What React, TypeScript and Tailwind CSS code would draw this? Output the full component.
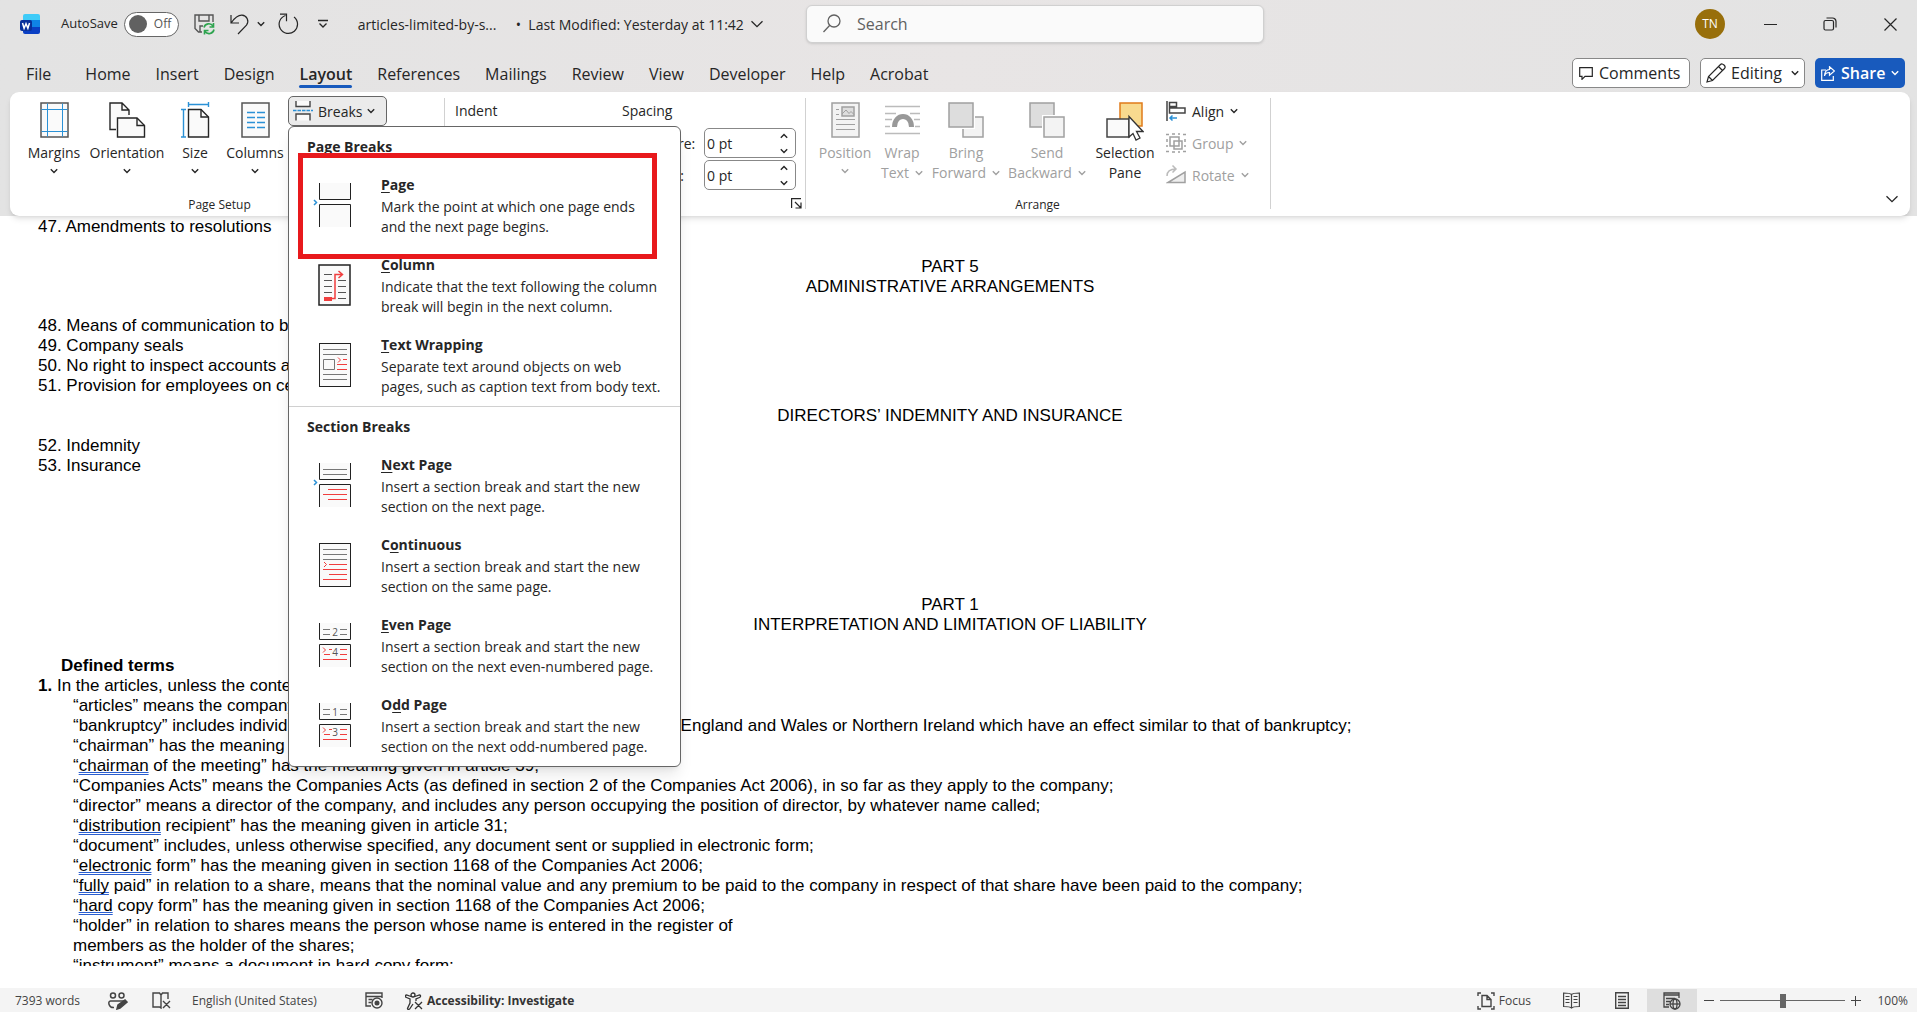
import { ReactNode, SVGProps } from "react";

const blue = "#2b91d6";
const red = "#f03e3e";

function Svg({ w, h, children, ...rest }: { w: number; h: number; children: ReactNode } & SVGProps<SVGSVGElement>) {
  return (
    <svg width={w} height={h} viewBox={`0 0 ${w} ${h}`} fill="none" stroke="currentColor" className="shrink-0" aria-hidden="true" {...rest}>
      {children}
    </svg>
  );
}

function Chevron({ large }: { large?: boolean }) {
  return large ? (
    <Svg w={14} h={8} strokeWidth={1.3}>
      <path d="M1.5 1.2 7 6.7l5.5-5.5" />
    </Svg>
  ) : (
    <Svg w={8} h={6} strokeWidth={1.4}>
      <path d="M.8 1.2 4 4.4l3.2-3.2" />
    </Svg>
  );
}

/* title bar icons */

function WordLogo() {
  return (
    <Svg w={20} h={20} stroke="none">
      <path d="M5 0h13a2 2 0 0 1 2 2v5H3V2a2 2 0 0 1 2-2z" fill="#3fcbf8" />
      <path d="M3 6h17v8H3z" fill="#0f83e6" />
      <path d="M3 13h17v5a2 2 0 0 1-2 2H5a2 2 0 0 1-2-2z" fill="#0a3fc4" />
      <rect x="0" y="6" width="12" height="11" rx="2" fill="#08309b" />
      <path d="M2.5 9l1.6 5.2L6 9.6l1.9 4.6L9.5 9" stroke="#fff" strokeWidth="1.5" />
    </Svg>
  );
}

function SaveIcon() {
  return (
    <Svg w={21} h={21} strokeWidth={1.4}>
      <path d="M8 18H4.5L1 14.5V1h18v7" stroke="#555" />
      <path d="M5 1v6h10V1M6 18v-6h3" stroke="#555" />
      <path d="M10 13.5a5 5 0 0 1 9-1.5M19.5 9v4h-4M20 15.5a5 5 0 0 1-9 2M10.5 20.5v-4h4" stroke="#2ea44f" strokeWidth="1.6" />
    </Svg>
  );
}

function UndoIcon() {
  return (
    <Svg w={20} h={21} strokeWidth={1.2}>
      <path d="M1 1v8h8M1.5 8.5C5 3.5 8 1 12 1.200c5 .4 7.500 5.800 4.500 10L8 20" />
    </Svg>
  );
}

function RedoIcon() {
  return (
    <Svg w={22} h={22} strokeWidth={1.2}>
      <path d="M2 1.200h6.500v7M7.500 2.500A9.200 9.200 0 1 0 16 4" />
    </Svg>
  );
}

/* ribbon icons */

function MarginsIcon() {
  return (
    <Svg w={29} h={36}>
      <rect x="1" y="1" width="27" height="34" fill="#fafafa" stroke="#555" strokeWidth="1.5" />
      <path d="M7.5 1.5v33M22.5 1.5v33M1.5 7.5h26M1.5 29.5h26" stroke={blue} />
    </Svg>
  );
}

function OrientationIcon() {
  return (
    <Svg w={37} h={36} strokeWidth={1.4}>
      <path d="M7 28H1V1h12l7 7v8H9v12z" fill="#fafafa" stroke="none" />
      <path d="M7 27.5H1V1h12l7 7v5M13 1v7h7" />
      <path d="M8.5 16H28l7.5 7.5V35h-27z" fill="#fafafa" />
      <path d="M28 16v7.5h7.5" />
    </Svg>
  );
}

function SizeIcon() {
  return (
    <Svg w={29} h={36} strokeWidth={1.4}>
      <path d="M7.5 7.5H20l7.5 7.5v20h-20z" fill="#fafafa" />
      <path d="M20 7.5V15h7.5" />
      <path d="M7.5 2.5h20M7.5 0v5M27.5 0v5M2.5 7.5V35M0 7.5h5M0 35h5" stroke={blue} />
    </Svg>
  );
}

function ColumnsIcon() {
  return (
    <Svg w={29} h={36}>
      <rect x="1" y="1" width="27" height="34" fill="#fafafa" stroke="#555" strokeWidth="1.5" />
      <path d="M6 10.5h8M16 10.5h8M6 15.5h8M16 15.5h8M6 20.5h8M16 20.5h8M6 25.5h8M16 25.5h8" stroke={blue} strokeWidth="1.5" />
    </Svg>
  );
}

function BreaksIcon() {
  return (
    <Svg w={20} h={20} strokeWidth={1.4}>
      <path d="M3 0v5.5h14V0M3 19.5V13h14v6.5" stroke="#444" fill="#fafafa" />
      <path d="M0 9.5h20" stroke={blue} strokeDasharray="3.5 1" />
    </Svg>
  );
}

function PositionIcon() {
  return (
    <Svg w={29} h={36}>
      <rect x="1" y="1" width="27" height="34" fill="#f3f3f3" strokeWidth="1.5" />
      <path d="M5 7.5h3M5 12.5h3M5 17.5h19M5 22.5h19M5 27.5h19" />
      <rect x="11" y="5" width="12" height="9" fill="#ddd" strokeWidth="1.5" />
      <path d="m11 12 4-4 3 3.5 2-2 3 3" />
    </Svg>
  );
}

function WrapTextIcon() {
  return (
    <Svg w={37} h={36}>
      <path d="M1 4.5h35M1 11.5h11M26 11.5h10M1 17.5h7M30 17.5h6M1 24.5h5M31 24.5h5M1 31.5h35" stroke="#bbb" strokeWidth="1.5" />
      <path d="M10.5 25c0-14 17-14 17 0" stroke="#999" strokeWidth="5" />
    </Svg>
  );
}

function BringForwardIcon() {
  return (
    <Svg w={36} h={36} strokeWidth={1.5}>
      <rect x="15" y="15" width="20" height="20" fill="#f3f3f3" />
      <rect x="0" y="0" width="27" height="27" fill="#fff" stroke="none" />
      <rect x="1" y="1" width="24" height="24" fill="#ddd" />
    </Svg>
  );
}

function SendBackwardIcon() {
  return (
    <Svg w={36} h={36} strokeWidth={1.5}>
      <rect x="1" y="1" width="24" height="24" fill="#ddd" />
      <rect x="13" y="13" width="24" height="24" fill="#fff" stroke="none" />
      <rect x="15" y="15" width="20" height="20" fill="#f3f3f3" />
    </Svg>
  );
}

function SelectionPaneIcon() {
  return (
    <Svg w={38} h={40} strokeWidth={1.5}>
      <rect x="14" y="1" width="22" height="23" fill="#f8da8f" stroke="#e07b1a" />
      <rect x="1" y="17" width="22" height="18" fill="#fafafa" stroke="#444" />
      <path d="M23 14.5 37 29.5h-6.500l3.500 6.500-4 2-3-6.500-4 3.500z" fill="#fff" stroke="#333" strokeWidth="1.3" />
    </Svg>
  );
}

function AlignIcon() {
  return (
    <Svg w={20} h={20} strokeWidth={1.5}>
      <path d="M1 0v20M3.5 1.5h7v4h-7zM3.5 7h15.5v5H3.5z" stroke="#444" />
      <path d="M11 17H4M6.5 14.5 4 17l2.5 2.5" stroke={blue} />
    </Svg>
  );
}

function GroupIcon() {
  return (
    <Svg w={20} h={20} strokeWidth={1.5}>
      <path d="M4 4h9v9H4zM8 8h8v8H8z" />
      <path d="M0 1.5h3M17 1.5h3M0 18.5h3M17 18.5h3M6 1h8M6 19h8M1 6v8M19 6v8" strokeDasharray="3 3" />
    </Svg>
  );
}

function RotateIcon() {
  return (
    <Svg w={20} h={20} strokeWidth={1.5}>
      <path d="M1 11C1 6 4 4 10 4M6.5.5 10 4 6.5 7.5" stroke="#bbb" />
      <path d="M2 17.5h17V7z" fill="#eee" />
    </Svg>
  );
}

/* menu icons, all drawn on the same 38 x 44 sheet */

function SplitPages({ children, arrow }: { children?: ReactNode; arrow?: boolean }) {
  return (
    <Svg w={38} h={44}>
      <path d="M6.5 0v16.5h31V0M6.5 44V21.5h31V44" fill="#fafafa" stroke="#222" />
      {arrow && <path d="m1 17 2.5 2.5L1 22" stroke={blue} strokeWidth="1.5" />}
      {children}
    </Svg>
  );
}

function NumberedPages({ first, second }: { first: string; second: string }) {
  return (
    <SplitPages>
      <path d="M10 6.5h7M10 11.5h7M27 6.5h7M27 11.5h7" stroke="#777" />
      <path d="M16 26.5h3M11 31.5h6M27 26.5h7M27 31.5h7M10 36.5h24M10 24.5l2.5 2.5-2.5 2.5" stroke={red} />
      <g fill="#555" stroke="none" fontSize="10" textAnchor="middle" fontFamily="Open Sans, sans-serif">
        <text x="22" y="13">{first}</text>
        <text x="22" y="33">{second}</text>
      </g>
    </SplitPages>
  );
}

function ColumnBreakIcon() {
  return (
    <Svg w={38} h={44}>
      <rect x="6" y="2" width="31" height="40" fill="#fafafa" stroke="#222" strokeWidth="1.5" />
      <path d="M11 11.5h8M11 17.5h8M11 23.5h8M11 29.5h8M25 17.5h8M25 23.5h8M25 29.5h8M25 35.5h8" stroke="#555" />
      <path d="M18 35.5h4v-24h7M25.5 8l4 3.5-4 3.5" stroke={red} strokeWidth="1.5" />
      <path d="M11 34h8v4h-8z" fill={red} stroke="none" />
    </Svg>
  );
}

function TextWrappingIcon() {
  return (
    <Svg w={38} h={44}>
      <rect x="6.5" y=".5" width="31" height="43" fill="#fafafa" stroke="#222" />
      <path d="M10 6.5h24M10 11.5h24M10.5 16.5h11v10h-11zM10 31.5h24M10 36.5h24" stroke="#777" />
      <path d="M30 16.5h4M24 21.5h10M24 26.5h10M25 14.5l2.5 2.5-2.5 2.5" stroke={red} />
    </Svg>
  );
}

function ContinuousIcon() {
  return (
    <Svg w={38} h={44}>
      <rect x="6.5" y=".5" width="31" height="43" fill="#fafafa" stroke="#222" />
      <path d="M10 6.5h24M10 11.5h24M10 16.5h24" stroke="#777" />
      <path d="M16 21.5h18M10 26.5h24M16 31.5h18M10 36.5h24M11 19l2.5 2.5L11 24" stroke={red} />
    </Svg>
  );
}

type BreakItem = { title: string; accessKey: number; text: string; icon: ReactNode };

const pageBreaks: BreakItem[] = [
  { title: "Page", accessKey: 0, text: "Mark the point at which one page ends\nand the next page begins.", icon: <SplitPages arrow /> },
  { title: "Column", accessKey: 0, text: "Indicate that the text following the column\nbreak will begin in the next column.", icon: <ColumnBreakIcon /> },
  { title: "Text Wrapping", accessKey: 0, text: "Separate text around objects on web\npages, such as caption text from body text.", icon: <TextWrappingIcon /> },
];

const sectionBreaks: BreakItem[] = [
  {
    title: "Next Page",
    accessKey: 0,
    text: "Insert a section break and start the new\nsection on the next page.",
    icon: (
      <SplitPages arrow>
        <path d="M10 6.5h24M10 11.5h24" stroke="#777" />
        <path d="M15 26.5h19M10 31.5h24M15 36.5h19" stroke={red} />
      </SplitPages>
    ),
  },
  { title: "Continuous", accessKey: 1, text: "Insert a section break and start the new\nsection on the same page.", icon: <ContinuousIcon /> },
  { title: "Even Page", accessKey: 0, text: "Insert a section break and start the new\nsection on the next even-numbered page.", icon: <NumberedPages first="2" second="4" /> },
  { title: "Odd Page", accessKey: 1, text: "Insert a section break and start the new\nsection on the next odd-numbered page.", icon: <NumberedPages first="1" second="3" /> },
];

function MenuItem({ item }: { item: BreakItem }) {
  const { title, accessKey } = item;
  return (
    <button role="menuitem" className="flex h-20 w-full items-start gap-[30px] pl-6 text-left">
      <span className="mt-[18px]">{item.icon}</span>
      <span className="pt-[10px]">
        <span className="block text-[14px] font-bold leading-5">
          {title.slice(0, accessKey)}
          <span className="underline underline-offset-2">{title[accessKey]}</span>
          {title.slice(accessKey + 1)}
        </span>
        <span className="mt-[2px] block whitespace-pre text-[14px] leading-5">{item.text}</span>
      </span>
    </button>
  );
}

function BreaksMenu() {
  return (
    <div role="menu" className="absolute left-0 top-[30px] z-10 w-[393px] rounded-md border border-[#666] bg-white pb-px text-[#262626] shadow-lg">
      <div className="flex h-[38px] items-center pl-[18px] text-[14px] font-bold">Page Breaks</div>
      {pageBreaks.map((item) => (
        <MenuItem key={item.title} item={item} />
      ))}
      <div className="mt-px flex h-[39px] items-center border-t border-[#d0d0d0] pl-[18px] text-[14px] font-bold">Section Breaks</div>
      {sectionBreaks.map((item) => (
        <MenuItem key={item.title} item={item} />
      ))}
      <div className="pointer-events-none absolute left-[9px] top-[26px] h-[106px] w-[359px] border-[5px] border-[#e8191c]" />
    </div>
  );
}

function TitleBar() {
  return (
    <div className="flex h-12 items-center">
      <div className="flex w-[806px] shrink-0 items-center pl-5">
        <WordLogo />
        <label className="ml-[21px] flex items-center gap-[6px] text-[13px]">
          AutoSave
          <input type="checkbox" className="peer sr-only" />
          <span className="flex h-[25px] w-[55px] items-center gap-[7px] rounded-full border border-[#666] bg-white pl-1 text-[12px] text-[#555]">
            <span className="h-[18px] w-[18px] rounded-full bg-[#616161]" />
            Off
          </span>
        </label>
        <button aria-label="Save" className="ml-[15px]"><SaveIcon /></button>
        <button aria-label="Undo" className="ml-[15px]"><UndoIcon /></button>
        <button aria-label="Undo history" className="ml-[7px]"><Chevron /></button>
        <button aria-label="Redo" className="ml-[13px]"><RedoIcon /></button>
        <button aria-label="Customise toolbar" className="ml-[18px]">
          <Svg w={10} h={10} strokeWidth={1.3}>
            <path d="M0 1.5h10M1.5 4.5 5 8l3.5-3.5" />
          </Svg>
        </button>
        <button className="ml-[30px] flex items-center whitespace-nowrap text-[14px]">
          <span className="w-[158px] text-left">articles-limited-by-s...</span>
          <span className="mr-[6px]">•&nbsp; Last Modified: Yesterday at 11:42</span>
          <Chevron large />
        </button>
      </div>
      <label className="mb-px flex h-[38px] w-[458px] items-center gap-4 rounded-md border border-[#d0d0d0] bg-[#fafafa] pl-4 text-[#616161] shadow-sm">
        <Svg w={18} h={19} strokeWidth={1.3}>
          <circle cx="11" cy="7" r="6" />
          <path d="M6.8 11.3.5 18" />
        </Svg>
        <input type="text" placeholder="Search" aria-label="Search" className="min-w-0 flex-1 bg-transparent text-[16px] outline-none placeholder:text-[#616161]" />
      </label>
      <div className="ml-auto mr-1 flex items-center gap-[14px]">
        <button className="mr-2 h-[30px] w-[30px] rounded-full bg-[#986f0b] text-[12px] text-white">TN</button>
        <button aria-label="Minimise" className="flex h-8 w-[46px] items-center justify-center">
          <Svg w={13} h={13}><path d="M0 6.5h13" /></Svg>
        </button>
        <button aria-label="Restore" className="flex h-8 w-[46px] items-center justify-center">
          <Svg w={14} h={14} strokeWidth={1.2}>
            <rect x="1" y="3.5" width="9.5" height="9.5" rx="1.5" />
            <path d="M3.5 1h6a3.500 3.500 0 0 1 3.5 3.5v6" />
          </Svg>
        </button>
        <button aria-label="Close" className="flex h-8 w-[46px] items-center justify-center">
          <Svg w={13} h={13} strokeWidth={1.2}><path d="m.5.5 12 12M12.5.5l-12 12" /></Svg>
        </button>
      </div>
    </div>
  );
}

const tabs = ["Home", "Insert", "Design", "Layout", "References", "Mailings", "Review", "View", "Developer", "Help", "Acrobat"];

function TabRow() {
  return (
    <div className="flex h-11 items-center pl-[26px] pr-3 pt-2 text-[16px]">
      <button className="mr-[34px]">File</button>
      <nav className="flex gap-[25px]">
        {tabs.map((tab) =>
          tab === "Layout" ? (
            <button key={tab} className="relative font-semibold">
              {tab}
              <span className="absolute inset-x-0 -bottom-[2px] h-[3px] rounded-full bg-[#185abd]" />
            </button>
          ) : (
            <button key={tab}>{tab}</button>
          )
        )}
      </nav>
      <div className="mb-[2px] ml-auto flex gap-[10px]">
        <button className="flex h-[30px] w-[118px] items-center gap-[6px] rounded-[5px] border border-[#888] bg-white pl-[6px]">
          <Svg w={14} h={13} strokeWidth={1.2}>
            <path d="M.7.7h12.6v8.6H6L3 12.3v-3H.7z" />
          </Svg>
          Comments
        </button>
        <button className="flex h-[30px] w-[105px] items-center gap-[5px] rounded-[5px] border border-[#888] bg-white pl-[5px]">
          <Svg w={20} h={20} strokeWidth={1.2}>
            <path d="M1 19l1.5-5.5L14.5 1.5c2-2 6 2 4 4L6.5 17.5zM12.5 3.5l4 4M2.5 13.5l4 4" />
          </Svg>
          Editing
          <span className="ml-1"><Chevron /></span>
        </button>
        <button className="flex h-[30px] w-[90px] items-center gap-[6px] rounded-[5px] bg-[#185abd] pl-[6px] font-semibold text-white">
          <Svg w={14} h={15} strokeWidth={1.2}>
            <path d="M5 4H.7v10.3h11.6V10M8.5.8l5 4.2-5 4.2V6.5c-3 0-4.500 1-5 3.5 0-4 2-6.500 5-6.500z" />
          </Svg>
          Share
          <Chevron />
        </button>
      </div>
    </div>
  );
}

function RibbonButton({ icon, lines, width, chevron, inlineChevron, disabled }: { icon: ReactNode; lines: string[]; width: string; chevron?: boolean; inlineChevron?: boolean; disabled?: boolean }) {
  return (
    <button disabled={disabled} className={`flex flex-col items-center pt-[6px] text-[14px] leading-5 disabled:text-[#a0a0a0] ${width}`}>
      <span className="mb-[5px] h-9">{icon}</span>
      {lines.map((line, i) => (
        <span key={line} className="flex items-center gap-[6px] whitespace-nowrap">
          {line}
          {inlineChevron && i === lines.length - 1 && <Chevron />}
        </span>
      ))}
      {chevron && <span className="mt-[5px]"><Chevron /></span>}
    </button>
  );
}

function Group({ label, children, className }: { label: string; children: ReactNode; className: string }) {
  return (
    <section className={`relative flex h-[124px] shrink-0 flex-col pt-1 ${className}`}>
      <div className="flex flex-1">{children}</div>
      <div className="pb-[2px] text-center text-[12px] leading-[18px]">{label}</div>
      <span className="absolute right-0 top-[6px] h-[111px] w-px bg-[#d1d1d1]" />
    </section>
  );
}

function Spinner({ label, id }: { label: string; id: string }) {
  return (
    <div className="flex h-[30px] items-center">
      <label htmlFor={id} className="w-14">{label}</label>
      <div className="flex h-[30px] w-[92px] items-center rounded-[5px] border border-[#888] bg-white pl-[2px] pr-[7px]">
        <input id={id} type="text" defaultValue="0 pt" className="min-w-0 flex-1 outline-none" />
        <span className="flex flex-col gap-[9px]">
          <button aria-label={`Increase ${label}`} className="rotate-180"><Chevron /></button>
          <button aria-label={`Decrease ${label}`}><Chevron /></button>
        </span>
      </div>
    </div>
  );
}

function SmallButton({ icon, children, disabled }: { icon: ReactNode; children: ReactNode; disabled?: boolean }) {
  return (
    <button disabled={disabled} className="flex h-8 items-center gap-[6px] pb-[2px] disabled:text-[#a0a0a0]">
      {icon}
      {children}
      <Chevron />
    </button>
  );
}

function Ribbon() {
  return (
    <div className="relative z-10 ml-[10px] mr-[7px] flex h-[124px] rounded-[9px] bg-white text-[14px] shadow-md">
      <Group label="Page Setup" className="w-[435px] pl-3 pr-7">
        <RibbonButton icon={<MarginsIcon />} lines={["Margins"]} width="w-16" chevron />
        <RibbonButton icon={<OrientationIcon />} lines={["Orientation"]} width="w-[82px]" chevron />
        <RibbonButton icon={<SizeIcon />} lines={["Size"]} width="w-[54px]" chevron />
        <RibbonButton icon={<ColumnsIcon />} lines={["Columns"]} width="w-[66px]" chevron />
        <div className="relative">
          <button aria-haspopup="menu" aria-expanded="true" className="flex h-[30px] w-[99px] items-center gap-[5px] rounded-[5px] border border-[#666] bg-[#ebebeb] pl-1">
            <BreaksIcon />
            Breaks
            <Chevron />
          </button>
          <BreaksMenu />
        </div>
      </Group>
      <Group label="Paragraph" className="w-[361px] pl-[10px]">
        <div className="w-[167px] leading-[30px]">Indent</div>
        <div>
          <div className="leading-[30px]">Spacing</div>
          <div className="ml-[26px] mt-[2px] flex flex-col gap-[2px]">
            <Spinner label="Before:" id="before" />
            <Spinner label="After:" id="after" />
          </div>
        </div>
        <button aria-label="Paragraph settings" className="absolute bottom-[7px] right-1">
          <Svg w={11} h={11} strokeWidth={1.2}>
            <path d="M10 .6H.6V10M4 4l5.5 5.5M10 4.5V10H4.5" />
          </Svg>
        </button>
      </Group>
      <Group label="Arrange" className="w-[465px] pl-2 pr-[10px]">
        <RibbonButton icon={<PositionIcon />} lines={["Position"]} width="w-[62px]" chevron disabled />
        <RibbonButton icon={<WrapTextIcon />} lines={["Wrap", "Text"]} width="w-[52px]" inlineChevron disabled />
        <RibbonButton icon={<BringForwardIcon />} lines={["Bring", "Forward"]} width="w-[76px]" inlineChevron disabled />
        <RibbonButton icon={<SendBackwardIcon />} lines={["Send", "Backward"]} width="w-[86px]" inlineChevron disabled />
        <RibbonButton icon={<SelectionPaneIcon />} lines={["Selection", "Pane"]} width="w-[70px]" />
        <div className="ml-[6px]">
          <SmallButton icon={<AlignIcon />}>Align</SmallButton>
          <SmallButton icon={<GroupIcon />} disabled>Group</SmallButton>
          <SmallButton icon={<RotateIcon />} disabled>Rotate</SmallButton>
        </div>
      </Group>
      <button aria-label="Collapse ribbon" className="mb-[13px] ml-auto mr-[11px] self-end"><Chevron large /></button>
    </div>
  );
}

/* a word that carries the grammar checker's double underline */
function Flag({ children }: { children: ReactNode }) {
  return <span className="underline decoration-[#2b5fd0] decoration-double decoration-1 underline-offset-1 [text-decoration-skip-ink:none]">{children}</span>;
}

function Page() {
  return (
    <main className="min-h-0 flex-1 bg-white pb-[22px]">
      <div className="h-full overflow-hidden whitespace-nowrap pl-[38px] pr-[55px] pt-px font-['Liberation_Sans',Arial,sans-serif] text-[17px] leading-5 text-black">
        <p>47. Amendments to resolutions</p>
        <h2 className="mt-5 text-center">PART 5<br />ADMINISTRATIVE ARRANGEMENTS</h2>
        <div className="mt-[19px]">
          <p>48. Means of communication to be used</p>
          <p>49. Company seals</p>
          <p>50. No right to inspect accounts and other records</p>
          <p>51. Provision for employees on cessation of business</p>
        </div>
        <h2 className="my-[10px] text-center">DIRECTORS’ INDEMNITY AND INSURANCE</h2>
        <p>52. Indemnity</p>
        <p>53. Insurance</p>
        <h2 className="mb-[21px] mt-[119px] text-center">PART 1<br />INTERPRETATION AND LIMITATION OF LIABILITY</h2>
        <h3 className="pl-[23px] font-bold">Defined terms</h3>
        <p><b>1.</b> In the articles, unless the context requires otherwise—</p>
        <div className="pl-[35px]">
          <p>“articles” means the company’s articles of association;</p>
          <p>“bankruptcy” includes individual insolvency proceeding in jurisdictions other than England and Wales or Northern Ireland which have an effect similar to that of bankruptcy;</p>
          <p>“chairman” has the meaning given in article 12;</p>
          <p>“<Flag>chairman</Flag> of the meeting” has the meaning given in article 39;</p>
          <p>“Companies Acts” means the Companies Acts (as defined in section 2 of the Companies Act 2006), in so far as they apply to the company;</p>
          <p>“director” means a director of the company, and includes any person occupying the position of director, by whatever name called;</p>
          <p>“<Flag>distribution</Flag> recipient” has the meaning given in article 31;</p>
          <p>“document” includes, unless otherwise specified, any document sent or supplied in electronic form;</p>
          <p>“<Flag>electronic</Flag> form” has the meaning given in section 1168 of the Companies Act 2006;</p>
          <p>“<Flag>fully</Flag> paid” in relation to a share, means that the nominal value and any premium to be paid to the company in respect of that share have been paid to the company;</p>
          <p>“<Flag>hard</Flag> copy form” has the meaning given in section 1168 of the Companies Act 2006;</p>
          <p>“holder” in relation to shares means the person whose name is entered in the register of<br />members as the holder of the shares;</p>
          <p>“instrument” means a document in hard copy form;</p>
        </div>
      </div>
    </main>
  );
}

function StatusBar() {
  return (
    <footer className="flex h-6 shrink-0 items-center bg-[#f4f4f4] pl-[15px] pr-[9px] pt-px text-[12px] text-[#444]">
      <span className="w-[93px]">7393 words</span>
      <button aria-label="Editors" className="w-11">
        <Svg w={20} h={18} strokeWidth={1.5}>
          <circle cx="5" cy="3.5" r="2.5" />
          <circle cx="13.5" cy="3.5" r="2.5" />
          <path d="M11 9H2.500C-.5 9 .5 16 6 15.5M10 9h7" />
          <path d="m9 17 1-4 7-5 2 2-7 6z" fill="currentColor" />
        </Svg>
      </button>
      <button aria-label="Spelling" className="w-10">
        <Svg w={19} h={17} strokeWidth={1.4}>
          <path d="M9 3 7.5 1H1v14h6.5L9 16V3l1.5-2H16v6M11 9l7 7M18 9l-7 7" />
        </Svg>
      </button>
      <button className="w-[173px] text-left">English (United States)</button>
      <button aria-label="Macros" className="w-10">
        <Svg w={18} h={17} strokeWidth={1.4}>
          <path d="M6 14H1V1h16v5M1 4.5h16M3.5 7.5h4M3.5 10.5h3" />
          <circle cx="12" cy="11" r="5" />
          <circle cx="12" cy="11" r="1.8" fill="currentColor" />
        </Svg>
      </button>
      <button className="flex items-center gap-1 font-bold text-[#333]">
        <Svg w={18} h={18} strokeWidth={1.3}>
          <circle cx="8" cy="3" r="2" />
          <path d="M6 4.5 1.5 3c-1.500 0-1.500 2 0 2.500L5 7v4l-2.500 5.500c0 1.500 2 1 2.500 0L8 12M10 4.500l4.500-1.500c1.500 0 1.500 2 0 2.500L11 7v2M10 10l7 7M17 10l-7 7" />
        </Svg>
        Accessibility: Investigate
      </button>
      <div className="ml-auto flex h-full items-center">
        <button className="mr-8 flex items-center gap-1">
          <Svg w={18} h={18} strokeWidth={1.4}>
            <path d="M1 4V1h3M14 1h3v3M17 14v3h-3M4 17H1v-3M5 3.5h5l4 4v7H5zM10 3.5v4h4" />
          </Svg>
          Focus
        </button>
        <button aria-label="Read mode" className="mr-[35px]">
          <Svg w={17} h={17} strokeWidth={1.2}>
            <path d="M8.500 2.500C7 1 4 1 .6 1v13.500c3.400 0 6.400 0 7.900 1.500 1.500-1.500 4.500-1.500 7.900-1.500V1c-3.400 0-6.400 0-7.900 1.500zM8.5 2.5V16M2.5 4.5h4M2.5 7.5h4M2.5 10.5h4M10.5 4.5h4M10.5 7.5h4M10.5 10.5h4" />
          </Svg>
        </button>
        <button aria-label="Print layout" className="mr-[18px]">
          <Svg w={14} h={17} strokeWidth={1.4}>
            <path d="M.7.7h12.6v15.6H.7zM3 4.5h8M3 7.5h8M3 10.5h8M3 13.5h8" />
          </Svg>
        </button>
        <button aria-label="Web layout" className="mr-[7px] flex h-full w-[50px] items-center justify-center bg-[#dedede]">
          <Svg w={18} h={18} strokeWidth={1.3}>
            <path d="M6 15H1V1h15v5M1 3h15M3 6.5h9M3 9.5h4M3 12.5h3" />
            <circle cx="12" cy="12" r="5" fill="#dedede" />
            <ellipse cx="12" cy="12" rx="2" ry="5" />
            <path d="M7 12h10" />
          </Svg>
        </button>
        <button aria-label="Zoom out"><Svg w={10} h={10}><path d="M0 4.5h10" /></Svg></button>
        <input
          type="range"
          min="0"
          max="100"
          defaultValue="50"
          aria-label="Zoom"
          className="mx-[6px] h-4 w-[125px] appearance-none bg-[linear-gradient(#666,#666)] bg-[length:100%_1px] bg-center bg-no-repeat [&::-webkit-slider-thumb]:h-[14px] [&::-webkit-slider-thumb]:w-[6px] [&::-webkit-slider-thumb]:appearance-none [&::-webkit-slider-thumb]:bg-[#666]"
        />
        <button aria-label="Zoom in"><Svg w={10} h={10}><path d="M0 4.5h10M4.5 0v10" /></Svg></button>
        <span className="ml-[15px] w-8 text-right">100%</span>
      </div>
    </footer>
  );
}

export default function App() {
  return (
    <div className="flex h-screen flex-col overflow-hidden bg-white font-['Open_Sans','Noto_Sans',sans-serif] text-[#262626]">
      <header className="shrink-0 bg-linear-to-r from-[#e3e3e3] via-[#e8e5e5] to-[#e3e3e3]">
        <TitleBar />
        <TabRow />
        <Ribbon />
      </header>
      <Page />
      <StatusBar />
    </div>
  );
}
